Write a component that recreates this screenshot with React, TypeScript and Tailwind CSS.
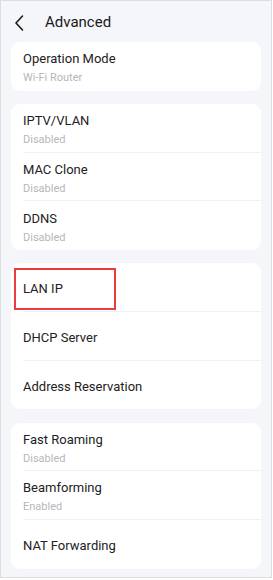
import React from 'react'

type Item = { title: string; sub?: string; mark?: boolean }

const groups: Item[][] = [
  [{ title: 'Operation Mode', sub: 'Wi-Fi Router' }],
  [
    { title: 'IPTV/VLAN', sub: 'Disabled' },
    { title: 'MAC Clone', sub: 'Disabled' },
    { title: 'DDNS', sub: 'Disabled' },
  ],
  [
    { title: 'LAN IP', mark: true },
    { title: 'DHCP Server' },
    { title: 'Address Reservation' },
  ],
  [
    { title: 'Fast Roaming', sub: 'Disabled' },
    { title: 'Beamforming', sub: 'Enabled' },
    { title: 'NAT Forwarding' },
  ],
]

const Row = ({ item, last }: { item: Item; last: boolean }) => {
  return (
    <div className="relative pl-3">
      <div
        className={
          'flex flex-col justify-center h-[48.7px] pt-[3px] ' +
          (last ? '' : 'border-b border-[#eff0f3]')
        }
      >
        <span className="text-[13px] leading-[17px] text-[#222]">{item.title}</span>
        {item.sub && (
          <span className="text-[11px] leading-[14px] mt-[4px] text-[#b5b7bc]">{item.sub}</span>
        )}
      </div>
      {item.mark && (
        <div className="absolute left-[3px] top-[5px] w-[102px] h-[42px] border-2 border-[#ee3b3b]" />
      )}
    </div>
  )
}

export default function App() {
  return (
    <div
      className="w-[272px] h-[578px] bg-[#f4f6fa] border border-[#dcdde0] overflow-hidden"
      style={{ fontFamily: 'Roboto, "Noto Sans", sans-serif' }}
    >
      <div className="flex items-center h-[41px] pl-[13px] pt-[2px]">
        <svg width="10" height="16" viewBox="0 0 10 16" fill="none">
          <path d="M8.5 1L2 8l6.5 7" stroke="#1a1a1a" strokeWidth="1.6" strokeLinecap="round" strokeLinejoin="round" />
        </svg>
        <span className="ml-[21px] text-[15px] text-[#1a1a1a]">Advanced</span>
      </div>
      <div className="flex flex-col gap-[13.3px] px-[10px]">
        {groups.map((g, i) => (
          <div key={i} className="bg-white rounded-[9px] overflow-hidden">
            {g.map((it, j) => (
              <Row key={it.title} item={it} last={j === g.length - 1} />
            ))}
          </div>
        ))}
      </div>
    </div>
  )
}
